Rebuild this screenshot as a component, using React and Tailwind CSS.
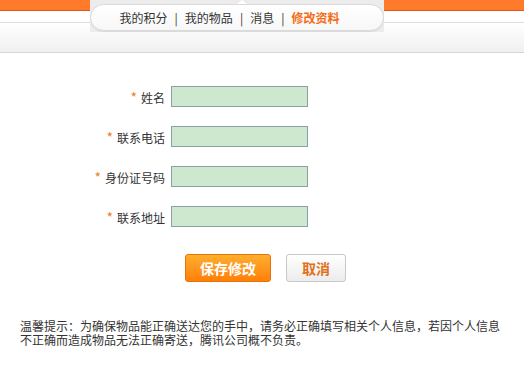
import React from "react";

const fields = ["姓名", "联系电话", "身份证号码", "联系地址"];

const Header = () => (
  <div className="relative h-[54px]">
    {/* orange strip */}
    <div className="h-[10px] bg-[#ff7b2b]" />
    <div className="h-px bg-[#e0561a]" />
    <div className="h-[12px] bg-white border-b border-[#dcdcdc]" />
    <div className="h-[30px] bg-gradient-to-b from-[#ffffff] to-[#f0f0f0] border-b border-[#d6d6d6]" />

    {/* nav tab */}
    <div className="absolute left-[90px] top-0 w-[294px] h-[32px] bg-[#ececec]">
      <div className="absolute left-[147px] top-0 w-0 h-0 border-x-[5px] border-x-transparent border-b-[4px] border-b-white" />
      <div className="absolute left-0 top-[4px] w-[294px] h-[27px] rounded-full bg-gradient-to-b from-white to-[#f7f7f7] border border-[#dadada] shadow-[0_1px_1px_rgba(0,0,0,0.08)] flex items-center justify-center pr-[15px] text-[12px] text-[#333]">
        <span>我的积分</span>
        <span className="mx-[7px]">|</span>
        <span>我的物品</span>
        <span className="mx-[7px]">|</span>
        <span>消息</span>
        <span className="mx-[7px]">|</span>
        <span className="font-bold text-[#f36b12]">修改资料</span>
      </div>
    </div>
  </div>
);

export default function App() {
  return (
    <div
      className="w-[524px] h-[384px] bg-white overflow-hidden text-[#333]"
      style={{ fontFamily: '"Noto Sans CJK SC", "Noto Sans", sans-serif' }}
    >
      <Header />

      {/* form */}
      <div className="mt-[32px] flex flex-col gap-[19px]">
        {fields.map((f) => (
          <div key={f} className="flex items-center h-[21px]">
            <div className="w-[171px] pr-[6px] text-right text-[12px] leading-none">
              <span className="text-[#e4832f] text-[14px] mr-[4px]">*</span>
              {f}
            </div>
            <input className="w-[137px] h-[21px] bg-[#cde8cf] border border-[#8a9ea6] outline-none" />
          </div>
        ))}
      </div>

      {/* buttons */}
      <div className="mt-[27px] flex pl-[185px] gap-[15px]">
        <button className="w-[86px] h-[28px] rounded-[3px] border border-[#e7720c] bg-gradient-to-b from-[#ffae2e] to-[#ff7f05] text-white text-[14px] font-bold leading-none">
          保存修改
        </button>
        <button className="w-[60px] h-[28px] rounded-[3px] border border-[#c8c8c8] bg-gradient-to-b from-white to-[#ececec] text-[#e2701a] text-[14px] font-bold leading-none">
          取消
        </button>
      </div>

      {/* tip */}
      <p className="mt-[37px] pl-[20px] pr-[20px] text-[12px] leading-[14px] text-[#333]">
        温馨提示：为确保物品能正确送达您的手中，请务必正确填写相关个人信息，若因个人信息不正确而造成物品无法正确寄送，腾讯公司概不负责。
      </p>
    </div>
  );
}
